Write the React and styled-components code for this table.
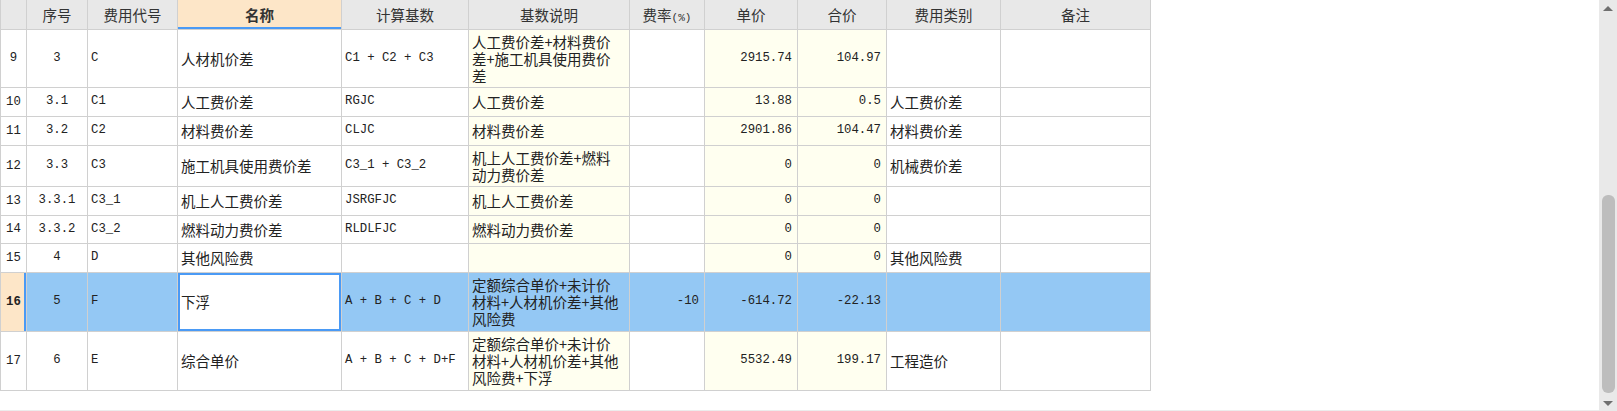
import React from "react";
import styled, { createGlobalStyle } from "styled-components";

const GlobalStyle = createGlobalStyle`
  html, body {
    margin: 0;
    padding: 0;
    background: #fff;
  }
`;

const CJK = '"Noto Sans CJK SC", "Noto Sans", sans-serif';
const MONO = '"Liberation Mono", "DejaVu Sans Mono", monospace';

const GRID = "#d0d0d0";
const BLUE = "#4a9af5";
const ROW_BLUE = "#94c8f4";
const PEACH = "#fde6c8";
const CREAM = "#fffff0";

const Page = styled.div`
  display: flex;
  width: 1617px;
  height: 411px;
  overflow: hidden;
`;

const Main = styled.div`
  flex: 1;
  height: 410px;
  border-bottom: 1px solid #ececec;
  overflow: hidden;
`;

const Grid = styled.table`
  border-collapse: collapse;
  table-layout: fixed;
  width: 1151px;
`;

const Row = styled.tr`
  height: ${(p) => p.$h}px;
`;

const HeadCell = styled.th`
  border: 1px solid ${GRID};
  border-top: none;
  background: ${(p) => (p.$active ? PEACH : "#e8e8e8")};
  box-shadow: ${(p) => (p.$active ? `inset 0 -2px 0 ${BLUE}` : "none")};
  font-family: ${CJK};
  font-size: 14.5px;
  font-weight: ${(p) => (p.$active ? 700 : 400)};
  color: #333;
  text-align: center;
  vertical-align: middle;
  padding: 0;
  white-space: nowrap;
`;

const Small = styled.span`
  font-family: ${MONO};
  font-size: 11px;
`;

const Cell = styled.td`
  border: 1px solid ${GRID};
  padding: 0 ${(p) => (p.$align === "right" ? "5px" : "3px")};
  text-align: ${(p) => p.$align || "left"};
  vertical-align: middle;
  background: ${(p) => p.$bg || "#fff"};
  box-shadow: ${(p) => (p.$editing ? `inset 0 0 0 2px ${BLUE}` : "none")};
  font-family: ${(p) => (p.$mono ? MONO : CJK)};
  font-size: ${(p) => (p.$mono ? "12.3px" : "14.5px")};
  line-height: 17px;
  color: #222;
  white-space: nowrap;
  overflow: hidden;
`;

const NumCell = styled.td`
  border: 1px solid ${GRID};
  padding: 0;
  text-align: center;
  vertical-align: middle;
  background: ${(p) => (p.$current ? PEACH : "#fff")};
  box-shadow: ${(p) => (p.$current ? `inset -2px 0 0 ${BLUE}` : "none")};
  font-family: ${MONO};
  font-size: 12.3px;
  font-weight: ${(p) => (p.$current ? 700 : 400)};
  color: #222;
`;

const Scrollbar = styled.div`
  width: 18px;
  height: 411px;
  background: #e9e9e9;
  display: flex;
  flex-direction: column;
  align-items: center;
`;

const ArrowBox = styled.div`
  height: 16px;
  width: 100%;
  display: flex;
  align-items: center;
  justify-content: center;
  &::before {
    content: "";
    width: 0;
    height: 0;
    border-left: 5px solid transparent;
    border-right: 5px solid transparent;
    ${(p) =>
      p.$down
        ? "border-top: 5px solid #6f6f6f;"
        : "border-bottom: 5px solid #6f6f6f;"}
  }
`;

const Spacer = styled.div`
  flex: 1;
`;

const Thumb = styled.div`
  width: 13px;
  height: 198px;
  margin: 0 0 2px 1px;
  border-radius: 6px;
  background: #bdbdbd;
`;

const widths = [26, 61, 90, 164, 127, 161, 75, 93, 89, 114, 150];

const headers = [
  "",
  "序号",
  "费用代号",
  "名称",
  "计算基数",
  "基数说明",
  "费率",
  "单价",
  "合价",
  "费用类别",
  "备注",
];

const rows = [
  {
    n: 9, h: 58, seq: "3", code: "C", name: "人材机价差", base: "C1 + C2 + C3",
    desc: ["人工费价差+材料费价", "差+施工机具使用费价", "差"],
    rate: "", price: "2915.74", total: "104.97", type: "",
  },
  {
    n: 10, h: 29, seq: "3.1", code: "C1", name: "人工费价差", base: "RGJC",
    desc: ["人工费价差"], rate: "", price: "13.88", total: "0.5", type: "人工费价差",
  },
  {
    n: 11, h: 29, seq: "3.2", code: "C2", name: "材料费价差", base: "CLJC",
    desc: ["材料费价差"], rate: "", price: "2901.86", total: "104.47", type: "材料费价差",
  },
  {
    n: 12, h: 41, seq: "3.3", code: "C3", name: "施工机具使用费价差", base: "C3_1 + C3_2",
    desc: ["机上人工费价差+燃料", "动力费价差"], rate: "", price: "0", total: "0", type: "机械费价差",
  },
  {
    n: 13, h: 29, seq: "3.3.1", code: "C3_1", name: "机上人工费价差", base: "JSRGFJC",
    desc: ["机上人工费价差"], rate: "", price: "0", total: "0", type: "",
  },
  {
    n: 14, h: 28, seq: "3.3.2", code: "C3_2", name: "燃料动力费价差", base: "RLDLFJC",
    desc: ["燃料动力费价差"], rate: "", price: "0", total: "0", type: "",
  },
  {
    n: 15, h: 29, seq: "4", code: "D", name: "其他风险费", base: "",
    desc: [], rate: "", price: "0", total: "0", type: "其他风险费",
  },
  {
    n: 16, h: 59, seq: "5", code: "F", name: "下浮", base: "A + B + C + D",
    desc: ["定额综合单价+未计价", "材料+人材机价差+其他", "风险费"],
    rate: "-10", price: "-614.72", total: "-22.13", type: "", selected: true,
  },
  {
    n: 17, h: 59, seq: "6", code: "E", name: "综合单价", base: "A + B + C + D+F",
    desc: ["定额综合单价+未计价", "材料+人材机价差+其他", "风险费+下浮"],
    rate: "", price: "5532.49", total: "199.17", type: "工程造价",
  },
];

const Lines = ({ lines }) =>
  lines.map((line, i) => (
    <React.Fragment key={i}>
      {i > 0 && <br />}
      {line}
    </React.Fragment>
  ));

const FeeRow = ({ row }) => {
  const sel = row.selected;
  const plain = sel ? ROW_BLUE : "#fff";
  const tint = sel ? ROW_BLUE : CREAM;
  return (
    <Row $h={row.h}>
      <NumCell $current={sel}>{row.n}</NumCell>
      <Cell $mono $align="center" $bg={plain}>{row.seq}</Cell>
      <Cell $mono $bg={plain}>{row.code}</Cell>
      <Cell $bg="#fff" $editing={sel}>{row.name}</Cell>
      <Cell $mono $bg={plain}>{row.base}</Cell>
      <Cell $bg={tint}>
        <Lines lines={row.desc} />
      </Cell>
      <Cell $mono $align="right" $bg={plain}>{row.rate}</Cell>
      <Cell $mono $align="right" $bg={tint}>{row.price}</Cell>
      <Cell $mono $align="right" $bg={tint}>{row.total}</Cell>
      <Cell $bg={plain}>{row.type}</Cell>
      <Cell $bg={plain} />
    </Row>
  );
};

const App = () => (
  <>
    <GlobalStyle />
    <Page>
      <Main>
        <Grid>
          <colgroup>
            {widths.map((w, i) => (
              <col key={i} style={{ width: w }} />
            ))}
          </colgroup>
          <thead>
            <Row $h={29}>
              {headers.map((h, i) => (
                <HeadCell key={i} $active={h === "名称"}>
                  {h}
                  {h === "费率" && <Small>(%)</Small>}
                </HeadCell>
              ))}
            </Row>
          </thead>
          <tbody>
            {rows.map((row) => (
              <FeeRow key={row.n} row={row} />
            ))}
          </tbody>
        </Grid>
      </Main>
      <Scrollbar>
        <ArrowBox />
        <Spacer />
        <Thumb />
        <ArrowBox $down />
      </Scrollbar>
    </Page>
  </>
);

export default App;
